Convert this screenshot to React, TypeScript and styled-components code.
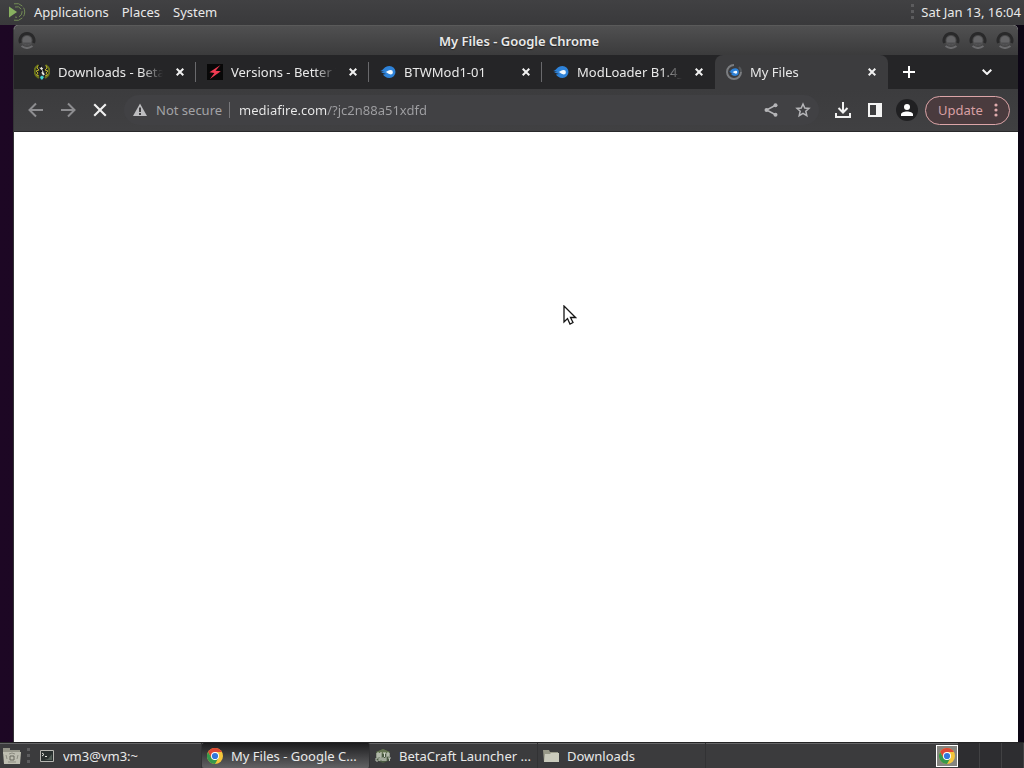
import React from 'react';
import styled, { createGlobalStyle, css } from 'styled-components';

const GlobalStyle = createGlobalStyle`
  *, *::before, *::after { box-sizing: border-box; }
  body { margin: 0; font-family: "Noto Sans", "Open Sans", sans-serif; font-size: 13px; line-height: 18px; color: #e9e9e9; }
  button, input { font: inherit; color: inherit; border: 0; padding: 0; margin: 0; background: none; }
  svg { display: block; flex: none; }
`;

const Desktop = styled.div`
  min-height: 100vh;
  display: flex;
  flex-direction: column;
  background: linear-gradient(90deg, #1d0724, #0c0614);
  overflow: hidden;
`;

const Panel = styled.header`
  height: 25px;
  display: flex;
  align-items: center;
  justify-content: space-between;
  padding: 0 3px 2px 7px;
  background: linear-gradient(#414143, #39393b);
  white-space: nowrap;
`;

const MenuBar = styled.nav`
  display: flex;
  align-items: center;
  gap: 13px;
`;

const MenuButton = styled.button`
  display: flex;
  align-items: center;
  gap: 7px;
`;

const Clock = styled.div`
  display: flex;
  align-items: center;
  gap: 7px;
`;

const Grip = styled.i`
  width: 3px;
  height: 15px;
  flex: none;
  background: repeating-linear-gradient(#5c5c5e 0 3px, transparent 3px 6px);
`;

const Window = styled.main`
  flex: 1;
  display: flex;
  flex-direction: column;
  margin: 0 6px 0 13px;
  border-left: 1px solid #333335;
  border-radius: 5px 5px 0 0;
  background: #ffffff;
  overflow: hidden;
`;

const TitleBar = styled.div`
  height: 30px;
  display: grid;
  grid-template-columns: 84px 1fr 78px;
  align-items: center;
  padding: 0 4px;
  border-top: 1px solid #5a5a5a;
  background: linear-gradient(#505051, #3b3b3c);
`;

const WindowTitle = styled.h1`
  margin: 0;
  font-size: 13px;
  line-height: 18px;
  font-weight: 600;
  text-align: center;
  text-shadow: 0 1px 1px #222222;
`;

const WindowButtons = styled.div<{ $end?: boolean }>`
  display: flex;
  gap: 9px;
  padding-bottom: 2px;
  justify-content: ${(p) => (p.$end ? 'flex-end' : 'flex-start')};
`;

const OrbButton = styled.button`
  width: 18px;
  height: 18px;
`;

const TabStrip = styled.div`
  height: 34px;
  display: flex;
  align-items: stretch;
  padding-left: 9px;
  background: #252527;
`;

const Tab = styled.div<{ $active?: boolean; $last?: boolean }>`
  flex: 0 1 173px;
  min-width: 0;
  display: flex;
  align-items: center;
  gap: 9px;
  padding: 0 8px 0 11px;
  background: linear-gradient(#69696c, #69696c) right center / 1px 20px no-repeat;
  ${(p) => p.$last && css`background: none;`}
  ${(p) => p.$active && css`background: #3c3c3e; border-radius: 8px 8px 0 0;`}
`;

const TabLabel = styled.button`
  flex: 1;
  min-width: 0;
  display: flex;
  align-items: center;
  gap: 8px;
`;

const TabTitle = styled.span`
  flex: 1;
  overflow: hidden;
  white-space: nowrap;
  text-align: left;
  mask-image: linear-gradient(90deg, #000 80%, transparent);
`;

const IconButton = styled.button<{ $size: number }>`
  width: ${(p) => p.$size}px;
  height: ${(p) => p.$size}px;
  flex: none;
  display: flex;
  align-items: center;
  justify-content: center;
`;

const TabTools = styled.div`
  flex: 1;
  display: flex;
  align-items: center;
  justify-content: space-between;
  padding: 0 21px 0 11px;
`;

const Toolbar = styled.div`
  height: 43px;
  display: flex;
  align-items: center;
  gap: 8px;
  padding: 0 8px 0 6px;
  background: linear-gradient(#3c3c3e, #404042);
  border-bottom: 1px solid #29292a;
`;

const ButtonGroup = styled.div`
  display: flex;
`;

const AccountGroup = styled.div`
  display: flex;
  align-items: center;
  gap: 2px;
`;

const AddressBar = styled.form`
  flex: 1;
  min-width: 0;
  height: 30px;
  display: flex;
  align-items: center;
  padding: 0 0 0 8px;
  border-radius: 15px;
  background: #414144;
`;

const Security = styled.button`
  display: flex;
  align-items: center;
  gap: 8px;
  padding-right: 7px;
  color: #a3a3a6;
  white-space: nowrap;
`;

const Divider = styled.i`
  width: 1px;
  height: 16px;
  background: #77777a;
`;

/* The host name is bright and the path is dimmed. */
const AddressInput = styled.input`
  flex: 1;
  min-width: 0;
  height: 20px;
  margin-left: 9px;
  outline: 0;
  color: #ececec;
  -webkit-text-fill-color: transparent;
  background: linear-gradient(90deg, #ececec 88px, #a0a0a3 88px);
  background-clip: text;
`;

const Avatar = styled.span`
  width: 22px;
  height: 22px;
  display: flex;
  align-items: center;
  justify-content: center;
  border-radius: 50%;
  background: #202022;
`;

const UpdateButton = styled.button`
  height: 29px;
  width: 85px;
  flex: none;
  display: flex;
  align-items: center;
  justify-content: space-between;
  padding: 0 11px 0 12px;
  border: 1px solid #dca5a8;
  border-radius: 15px;
  background: #4a3b3e;
  color: #d9a0a4;
`;

const PageView = styled.section`
  flex: 1;
  position: relative;
  background: #ffffff;
`;

const Pointer = styled.svg`
  position: absolute;
  left: 549px;
  top: 173px;
`;

const Taskbar = styled.footer`
  height: 26px;
  display: flex;
  align-items: stretch;
  border-top: 1px solid #242425;
  background: linear-gradient(#666668 0 1px, #3b3b3d 1px);
`;

const Launcher = styled.button`
  width: 27px;
  display: flex;
  align-items: center;
  padding-left: 2px;
`;

const TaskList = styled.div`
  flex: 1;
  min-width: 0;
  display: flex;
  padding-left: 4px;
`;

const Task = styled.button<{ $active?: boolean }>`
  flex: 0 1 168px;
  min-width: 0;
  display: flex;
  align-items: center;
  gap: 8px;
  padding: 0 5px;
  border-right: 1px solid #323234;
  ${(p) => p.$active && css`
    border-radius: 2px;
    background: linear-gradient(#1c1c1e, #38383a 40%, #626264);
  `}
`;

const TaskText = styled.span`
  flex: 1;
  overflow: hidden;
  white-space: nowrap;
  text-overflow: ellipsis;
  text-align: left;
`;

const Workspaces = styled.div`
  display: flex;
  align-items: stretch;
`;

const Workspace = styled.button<{ $active?: boolean }>`
  width: 22px;
  display: flex;
  align-items: center;
  justify-content: center;
  border-right: 1px solid #414143;
  background: #2d2d30;
  ${(p) => p.$active && css`
    margin: 2px 0 1px;
    border: 1px solid #ffffff;
    background: #858580;
  `}
`;

function MateLogo() {
  return (
    <svg width="20" height="20" viewBox="0 0 20 20" fill="none" stroke="#728b55">
      <path d="M2 4.5 10 10 2 15.5z" fill="#88b060" stroke="none" />
      <path d="M7 1.8A8.5 8.5 0 1 1 7 18.2" strokeDasharray="9 2" />
      <path d="M8 5A5.3 5.3 0 1 1 8 15" strokeDasharray="7 2" />
    </svg>
  );
}

function Orb({ label }: { label: string }) {
  return (
    <OrbButton aria-label={label}>
      <svg width="18" height="18" viewBox="0 0 18 18" fill="none">
        <circle cx="9" cy="9" r="6.500" fill="#4c4c4d" />
        <path d="M2.500 12A7 7 0 1 1 15.500 12" stroke="#29292a" strokeWidth="3" />
        <circle cx="9" cy="9.500" r="4.500" fill="#646466" />
        <path d="M5 11.500A4.500 4.500 0 0 0 13 11.500z" fill="#4c4c4e" />
        <path d="M3.500 15Q9 19 14.500 15" stroke="#6a6a6c" strokeWidth="2" />
      </svg>
    </OrbButton>
  );
}

function CloseIcon({ size = 8, width = 2 }: { size?: number; width?: number }) {
  return (
    <svg width={size} height={size} viewBox="0 0 8 8" stroke="#f1f1f1" strokeWidth={width}>
      <path d="M.7.7 7.3 7.3M7.3.7.7 7.3" />
    </svg>
  );
}

function CraftIcon() {
  return (
    <svg width="16" height="16" viewBox="0 0 16 16" fill="none">
      <path d="M4.500 1C1 3 0 6 1 9.500S3.500 13 5 14M11.500 1C15 3 16 6 15 9.500S12.500 13 11 14" stroke="#68721a" strokeWidth="2" />
      <path d="M4 1.500 3 4 5 6 2 7 4 9 2.500 11 5 12M12 1.500 13 4 11 6 14 7 12 9 13.500 11 11 12" stroke="#b9b02b" />
      <path d="M6 3 9 6 8 8 10 11" stroke="#e9e9df" strokeWidth="2" />
      <path d="M5 2 7 3M9 5 10 7M6 8 8 7" stroke="#111" strokeWidth="2" />
      <path d="M6 13 8 11.500 10 13 8.500 15.500H7z" fill="#43d2d1" />
    </svg>
  );
}

function BoltIcon() {
  return (
    <svg width="16" height="16" viewBox="0 0 16 16">
      <path fill="#080808" d="M0 0h16v16H0z" />
      <path d="M13.500 1 2.500 8.300 7.400 9 3 15 13.800 7.300 8.500 6.700z" fill="#f23b52" />
    </svg>
  );
}

function MediaFireShape() {
  return (
    <g>
      <path d="M0 7C3 7 4 2 9.500 2A6 6 0 0 1 9.500 14C6 14 4 12 3 10.500L6 10 1 8.500 4 7.800z" fill="#2e82d8" />
      <path d="M5.500 8C7.500 7.500 8.500 6 10.700 6A2.200 2.200 0 0 1 10.700 10.400C8.500 10.400 7.500 8.500 5.500 8z" fill="#f4faff" />
    </g>
  );
}

function FlameIcon() {
  return <svg width="16" height="16" viewBox="0 0 16 16"><MediaFireShape /></svg>;
}

function LoadingIcon() {
  return (
    <svg width="16" height="16" viewBox="0 0 16 16">
      <path d="M8 1A7 7 0 1 0 15 8" fill="none" stroke="#7b7d80" strokeWidth="2" />
      <path d="M15 8A7 7 0 0 0 13 3" fill="none" stroke="#55585b" strokeWidth="2" />
      <g transform="translate(3 3) scale(.64)"><MediaFireShape /></g>
    </svg>
  );
}

function ArrowIcon({ forward }: { forward?: boolean }) {
  return (
    <svg width="16" height="16" viewBox="0 0 16 16" fill="none" stroke="#8d8d90" strokeWidth="2">
      {forward ? <path d="M1 8H14M8 1.500 14.500 8 8 14.500" /> : <path d="M15 8H2M8 1.500 1.500 8 8 14.500" />}
    </svg>
  );
}

function WarningIcon() {
  return (
    <svg width="16" height="16" viewBox="0 0 16 16">
      <path d="M8 1.500 15 14H1z" fill="#bdbdc0" />
      <path d="M8 5.500V10M8 11V13" stroke="#404042" strokeWidth="2" />
    </svg>
  );
}

function ShareIcon() {
  return (
    <svg width="16" height="16" viewBox="0 0 16 16" fill="#b5b5b8">
      <path d="M13 3 3.500 8 13 13" fill="none" stroke="#b5b5b8" strokeWidth="1.500" />
      <circle cx="12.500" cy="3.200" r="2" /><circle cx="3.500" cy="8" r="2" /><circle cx="12.500" cy="12.800" r="2" />
    </svg>
  );
}

function StarIcon() {
  return (
    <svg width="16" height="16" viewBox="0 0 16 16">
      <path d="M8 2 9.800 6 14 6.400 10.800 9.200 11.800 13.600 8 11.300 4.200 13.600 5.200 9.200 2 6.400 6.200 6z" fill="none" stroke="#b5b5b8" strokeWidth="1.500" />
    </svg>
  );
}

function DownloadIcon() {
  return (
    <svg width="18" height="18" viewBox="0 0 18 18" fill="none" stroke="#f2f2f2" strokeWidth="2">
      <path d="M9 1V11M4.500 7 9 11.500 13.500 7M2 12V16H16V12" />
    </svg>
  );
}

function SidePanelIcon() {
  return (
    <svg width="14" height="14" viewBox="0 0 14 14">
      <path d="M1 1H13V13H1z" fill="none" stroke="#f4f4f4" strokeWidth="2" />
      <path d="M8 1h5v12H8z" fill="#f4f4f4" />
    </svg>
  );
}

function PersonIcon() {
  return (
    <svg width="12" height="12" viewBox="0 0 12 12" fill="#ffffff">
      <circle cx="6" cy="3" r="3" /><path d="M0 12V10.500C0 8.500 3 7.500 6 7.500S12 8.500 12 10.500V12z" />
    </svg>
  );
}

function ChromeIcon() {
  return (
    <svg width="16" height="16" viewBox="0 0 16 16">
      <circle cx="8" cy="8" r="8" fill="#f5c63b" />
      <path d="M8 4H14.930A8 8 0 0 0 1.070 4L4.540 10z" fill="#dd4736" />
      <path d="M1.070 4A8 8 0 0 0 8 16L11.460 10 8 12 4.540 10z" fill="#36984c" />
      <circle cx="8" cy="8" r="4" fill="#fff" /><circle cx="8" cy="8" r="3.100" fill="#3276dc" />
    </svg>
  );
}

function FolderIcon({ camera }: { camera?: boolean }) {
  return camera ? (
    <svg width="20" height="18" viewBox="0 0 20 18">
      <path d="M1 3V1h7v2h10v4H1z" fill="#96968a" />
      <path d="M1 5h18l-1 12H2z" fill="#bebeb1" />
      <path d="M4 8 5 12M16 8 15 12M7 7Q10 5 13 7M6 15H14" stroke="#8d8d82" fill="none" />
      <path d="M8 9H12V13H8z" fill="none" stroke="#69695f" />
    </svg>
  ) : (
    <svg width="16" height="16" viewBox="0 0 16 16">
      <path d="M0 2h6l1 2h8v10H1z" fill="#999989" /><path d="M2 6h5l1-1h8v9H1z" fill="#cacabc" />
    </svg>
  );
}

function TerminalIcon() {
  return (
    <svg width="16" height="16" viewBox="0 0 16 16" fill="none">
      <path d="M1.500 2.500H14.500V13.500H1.500z" fill="#29302f" stroke="#b6b6b1" />
      <path d="M3 5 5 6.500 3 8M6 8.500H8" stroke="#e6e6e0" /><path d="M9 11 13 6V12H5z" fill="#505b54" />
    </svg>
  );
}

function LauncherIcon() {
  return (
    <svg width="16" height="16" viewBox="0 0 16 16" fill="none">
      <path d="M1 4 8 1 15 4V12L8 15 1 12z" fill="#4b5b42" /><path d="M1 4 8 1 15 4 8 6z" fill="#647451" />
      <path d="M2 5V9H4V5H2M2 7H4M7 5H5V9H7M5 7H7M8 5H11M9.500 5V9M12 9V5H14V9M12 7H14" stroke="#d4d8cc" />
      <path d="M3 10H1V13H3M4 13V10H6V12H4M7 13V10H9V13M7 12H9M10 13V10H12M10 12H12M13 10H16M14.500 10V13" stroke="#bdc2b6" />
    </svg>
  );
}

const tabs = [
  { title: 'Downloads - Beta', icon: <CraftIcon /> },
  { title: 'Versions - Better T', icon: <BoltIcon /> },
  { title: 'BTWMod1-01', icon: <FlameIcon /> },
  { title: 'ModLoader B1.4_0', icon: <FlameIcon /> },
  { title: 'My Files', icon: <LoadingIcon /> },
];

const tasks = [
  { title: 'vm3@vm3:~', icon: <TerminalIcon /> },
  { title: 'My Files - Google C...', icon: <ChromeIcon /> },
  { title: 'BetaCraft Launcher ...', icon: <LauncherIcon /> },
  { title: 'Downloads', icon: <FolderIcon /> },
];

export default function App() {
  return (
    <Desktop>
      <GlobalStyle />
      <Panel>
        <MenuBar>
          <MenuButton><MateLogo />Applications</MenuButton>
          <MenuButton>Places</MenuButton>
          <MenuButton>System</MenuButton>
        </MenuBar>
        <Clock><Grip /><time>Sat Jan 13, 16:04</time></Clock>
      </Panel>
      <Window>
        <TitleBar>
          <WindowButtons><Orb label="Window menu" /></WindowButtons>
          <WindowTitle>My Files - Google Chrome</WindowTitle>
          <WindowButtons $end><Orb label="Minimize" /><Orb label="Maximize" /><Orb label="Close window" /></WindowButtons>
        </TitleBar>
        <TabStrip>
          {tabs.map((tab, i) => (
            <Tab key={tab.title} $active={i === 4} $last={i === 3}>
              <TabLabel aria-pressed={i === 4}>{tab.icon}<TabTitle>{tab.title}</TabTitle></TabLabel>
              <IconButton $size={16} aria-label={`Close ${tab.title}`}><CloseIcon /></IconButton>
            </Tab>
          ))}
          <TabTools>
            <IconButton $size={20} aria-label="New tab">
              <svg width="12" height="12" viewBox="0 0 12 12" stroke="#fff" strokeWidth="2"><path d="M6 0V12M0 6H12" /></svg>
            </IconButton>
            <IconButton $size={20} aria-label="Search tabs">
              <svg width="10" height="6" viewBox="0 0 10 6" fill="none" stroke="#f4f4f4" strokeWidth="2"><path d="M.7.700 5 5 9.300.700" /></svg>
            </IconButton>
          </TabTools>
        </TabStrip>
        <Toolbar>
          <ButtonGroup>
            <IconButton $size={32} aria-label="Back"><ArrowIcon /></IconButton>
            <IconButton $size={32} aria-label="Forward"><ArrowIcon forward /></IconButton>
            <IconButton $size={32} aria-label="Stop"><CloseIcon size={14} width={1.2} /></IconButton>
          </ButtonGroup>
          <AddressBar onSubmit={(e) => e.preventDefault()}>
            <Security type="button"><WarningIcon />Not secure</Security>
            <Divider />
            <AddressInput aria-label="Address" defaultValue="mediafire.com/?jc2n88a51xdfd" />
            <IconButton $size={32} type="button" aria-label="Share"><ShareIcon /></IconButton>
            <IconButton $size={32} type="button" aria-label="Bookmark"><StarIcon /></IconButton>
          </AddressBar>
          <AccountGroup>
            <ButtonGroup>
              <IconButton $size={32} aria-label="Downloads"><DownloadIcon /></IconButton>
              <IconButton $size={32} aria-label="Side panel"><SidePanelIcon /></IconButton>
              <IconButton $size={32} aria-label="Profile"><Avatar><PersonIcon /></Avatar></IconButton>
            </ButtonGroup>
            <UpdateButton>
              Update
              <svg width="4" height="14" viewBox="0 0 4 14" fill="#e0abad"><circle cx="2" cy="2" r="1.600" /><circle cx="2" cy="7" r="1.600" /><circle cx="2" cy="12" r="1.600" /></svg>
            </UpdateButton>
          </AccountGroup>
        </Toolbar>
        <PageView aria-label="Page">
          <Pointer width="14" height="21" viewBox="0 0 14 21">
            <path d="M1 1V17L4.500 13.500 7 19 10 17.500 7.500 12.500H12.500z" fill="#fff" stroke="#151515" strokeWidth="1.300" />
          </Pointer>
        </PageView>
      </Window>
      <Taskbar>
        <Launcher aria-label="Show files"><FolderIcon camera /></Launcher>
        <MenuButton as="span"><Grip /></MenuButton>
        <TaskList>
          {tasks.map((task, i) => (
            <Task key={task.title} $active={i === 1}>{task.icon}<TaskText>{task.title}</TaskText></Task>
          ))}
        </TaskList>
        <Workspaces>
          <Workspace $active aria-label="Workspace 1"><ChromeIcon /></Workspace>
          <Workspace aria-label="Workspace 2" /><Workspace aria-label="Workspace 3" /><Workspace aria-label="Workspace 4" />
        </Workspaces>
      </Taskbar>
    </Desktop>
  );
}
